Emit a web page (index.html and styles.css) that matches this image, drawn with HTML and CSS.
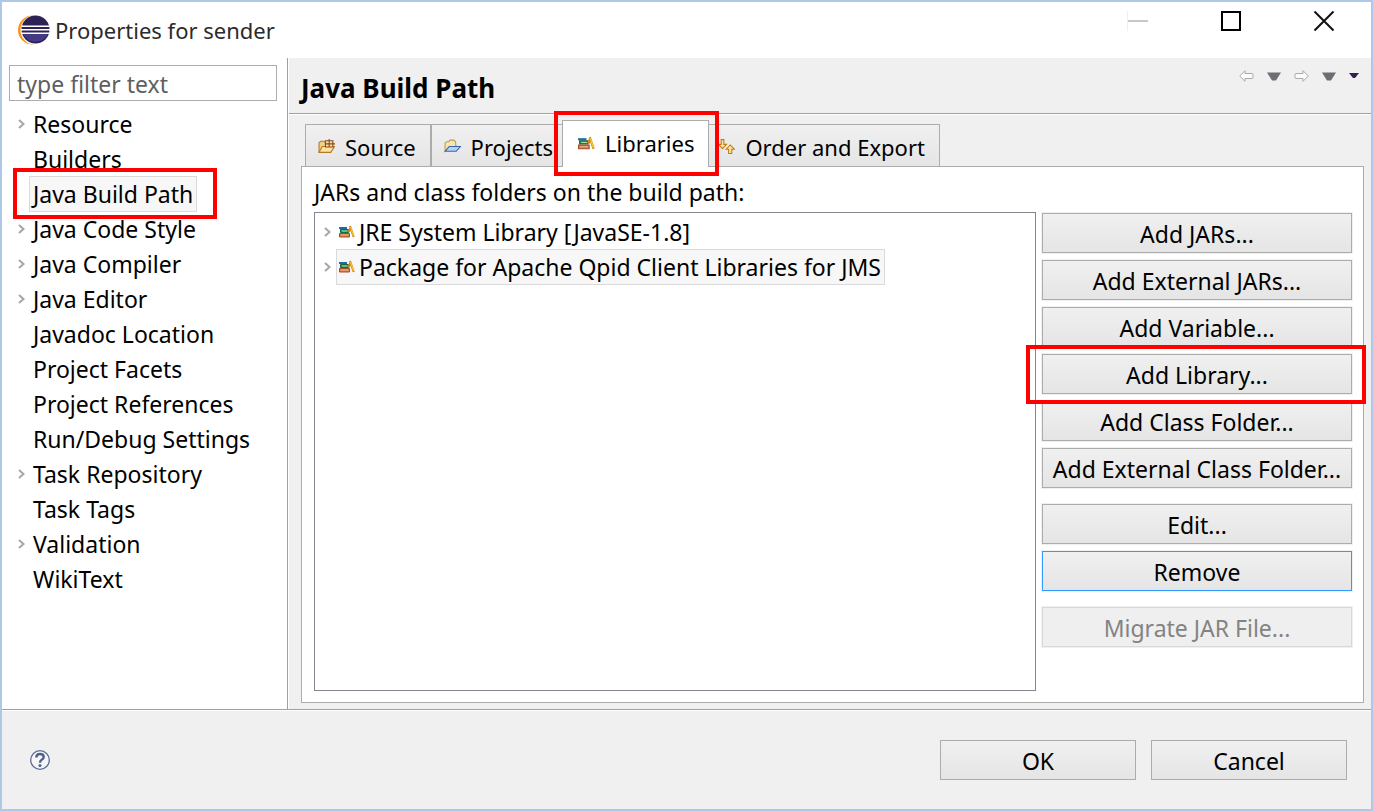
FILE: index.html
```html
<!DOCTYPE html>
<html lang="en">
<head>
<meta charset="utf-8">
<title>Properties for sender</title>
<link rel="stylesheet" href="styles.css">
</head>
<body>
<svg class="defs" aria-hidden="true">
  <symbol id="chevron" viewBox="0 0 7 10"><path d="M1 1l4.500 4-4.500 4" fill="none" stroke="#a6a6a6" stroke-width="2"/></symbol>
  <symbol id="books" viewBox="0 0 16 13">
    <path d="M0 1.500h8v2H0z" fill="#1f6aa5"/><path d="M1.500 4h8v3h-8z" fill="#23935e" stroke="#136b45"/><path d="M3 5.500h5.500" stroke="#a9dcb0"/>
    <path d="M.5 8h10v3.500H.5z" fill="#d08050" stroke="#a64e25"/><path d="M2 9.500h7.500" stroke="#efb58a"/>
    <path d="M11 .5l3.700 11M11.500 2l-1.700 4.500" stroke="#d98c12" stroke-width="2.200" fill="none"/><path d="M11.500 1.500l3 9" stroke="#ffcb3d"/>
  </symbol>
</svg>
<div class="window">
  <header class="titlebar">
    <svg class="logo" viewBox="0 0 32 30" aria-hidden="true">
      <circle cx="14.500" cy="15" r="14.500" fill="#f7941e"/><circle cx="17.500" cy="15" r="15" fill="#fff"/>
      <circle cx="17.500" cy="14.500" r="14" fill="#2c2255"/><path d="M5 19h25a14 14 0 0 1-25 0z" fill="#433a85"/>
      <path d="M3.500 11.200h28M3 14.700h29M3.500 18.200h28" stroke="#fff" stroke-width="1.600"/>
    </svg>
    <h1 class="title">Properties for sender</h1>
    <div class="window-buttons">
      <button class="window-button" aria-label="Minimize" disabled><svg viewBox="0 0 22 22"><path d="M.5 1v20" stroke="#efefef"/><path d="M1 11h20" stroke="#c8c8c8" stroke-width="2"/></svg></button>
      <button class="window-button" aria-label="Maximize"><svg viewBox="0 0 22 22"><path d="M2 2h18v18H2z" fill="none" stroke="#000" stroke-width="2"/></svg></button>
      <button class="window-button" aria-label="Close"><svg viewBox="0 0 22 22"><path d="M1.500 1.500l19 19M20.500 1.500l-19 19" stroke="#111" stroke-width="2"/></svg></button>
    </div>
  </header>
  <div class="body">
    <aside class="sidebar">
      <input class="filter" type="text" placeholder="type filter text" aria-label="Filter">
      <nav class="categories" aria-label="Categories">
        <a class="category" href="#"><svg class="chevron"><use href="#chevron"/></svg><span>Resource</span></a>
        <a class="category" href="#"><span>Builders</span></a>
        <a class="category selected marked" href="#" aria-current="page"><span>Java Build Path</span></a>
        <a class="category" href="#"><svg class="chevron"><use href="#chevron"/></svg><span>Java Code Style</span></a>
        <a class="category" href="#"><svg class="chevron"><use href="#chevron"/></svg><span>Java Compiler</span></a>
        <a class="category" href="#"><svg class="chevron"><use href="#chevron"/></svg><span>Java Editor</span></a>
        <a class="category" href="#"><span>Javadoc Location</span></a>
        <a class="category" href="#"><span>Project Facets</span></a>
        <a class="category" href="#"><span>Project References</span></a>
        <a class="category" href="#"><span>Run/Debug Settings</span></a>
        <a class="category" href="#"><svg class="chevron"><use href="#chevron"/></svg><span>Task Repository</span></a>
        <a class="category" href="#"><span>Task Tags</span></a>
        <a class="category" href="#"><svg class="chevron"><use href="#chevron"/></svg><span>Validation</span></a>
        <a class="category" href="#"><span>WikiText</span></a>
      </nav>
    </aside>
    <main class="page">
      <div class="page-header">
        <h2 class="page-title">Java Build Path</h2>
        <div class="history">
          <button class="tool" aria-label="Back"><svg width="15" height="12" viewBox="0 0 15 12"><path d="M.7 6L6 .7V3.500h7q1 0 1 1v3q0 1-1 1H6v2.800z" fill="#fafafa" stroke="#aaa"/></svg></button>
          <button class="tool" aria-label="Back history"><svg width="14" height="9" viewBox="0 0 14 9"><path d="M0 .5h14L9 8.500H5z" fill="#6d6e73"/></svg></button>
          <button class="tool" aria-label="Forward"><svg width="15" height="12" viewBox="0 0 15 12"><path d="M14.300 6L9 .7V3.500H2q-1 0-1 1v3q0 1 1 1h7v2.800z" fill="#fafafa" stroke="#aaa"/></svg></button>
          <button class="tool" aria-label="Forward history"><svg width="14" height="9" viewBox="0 0 14 9"><path d="M0 .5h14L9 8.500H5z" fill="#6d6e73"/></svg></button>
          <button class="tool" aria-label="View menu"><svg width="10" height="6" viewBox="0 0 10 6"><path d="M0 0h10L6 5H4z" fill="#33204f"/></svg></button>
        </div>
      </div>
      <div class="content">
        <div class="tabs" role="tablist">
          <button class="tab" role="tab" aria-selected="false">
            <svg class="tab-icon" viewBox="0 0 16 14"><path d="M1 12V3.500l1.500-1.500h3L7 3.500h5V12z" fill="#f3d082" stroke="#b5782a"/><path d="M1 12.500L4 7h11.500l-3.500 5.500z" fill="#fbe3a2" stroke="#b5782a"/><path d="M7 1.500h7v6H7zM7 4.500h9M10.500 0v7.500" fill="#f7dfae" stroke="#8a4b14"/></svg>
            <span>Source</span></button>
          <button class="tab" role="tab" aria-selected="false">
            <svg class="tab-icon" viewBox="0 0 16 14"><path d="M1 11.500V4l1.500-1.500h2L5.500 1h4L11 3v3l1 1H5z" fill="#fae7a8" stroke="#b79a5b"/><path d="M1 11.500L5 7h10.500l-4 4.500z" fill="#b3d2f7" stroke="#3764b0"/></svg>
            <span>Projects</span></button>
          <button class="tab active marked" role="tab" aria-selected="true">
            <svg class="tab-icon"><use href="#books"/></svg>
            <span>Libraries</span></button>
          <button class="tab" role="tab" aria-selected="false">
            <svg class="tab-icon" viewBox="0 0 16 14"><path d="M3 .5h2.500V5H8L4.300 9 .5 5H3z" fill="#ffe596" stroke="#bd7b1c"/><path d="M10 13.500h3V9.500h2.500L11.500 5.500 7.700 9.500H10z" fill="#ffe596" stroke="#bd7b1c"/></svg>
            <span>Order and Export</span></button>
        </div>
        <section class="panel" role="tabpanel">
          <p class="panel-label" id="jars">JARs and class folders on the build path:</p>
          <div class="panel-body">
            <ul class="entries" aria-labelledby="jars">
              <li class="entry"><svg class="chevron"><use href="#chevron"/></svg><span class="entry-label"><svg class="entry-icon"><use href="#books"/></svg>JRE System Library [JavaSE-1.8]</span></li>
              <li class="entry selected"><svg class="chevron"><use href="#chevron"/></svg><span class="entry-label"><svg class="entry-icon"><use href="#books"/></svg>Package for Apache Qpid Client Libraries for JMS</span></li>
            </ul>
            <div class="actions">
              <div class="action-group">
                <button class="button">Add JARs...</button>
                <button class="button">Add External JARs...</button>
                <button class="button">Add Variable...</button>
                <button class="button marked">Add Library...</button>
                <button class="button">Add Class Folder...</button>
                <button class="button">Add External Class Folder...</button>
              </div>
              <div class="action-group">
                <button class="button">Edit...</button>
                <button class="button default">Remove</button>
              </div>
              <button class="button" disabled>Migrate JAR File...</button>
            </div>
          </div>
        </section>
      </div>
    </main>
  </div>
  <footer class="footer">
    <button class="help" aria-label="Help"><svg width="20" height="20" viewBox="0 0 20 20"><circle cx="10" cy="10" r="9.300" fill="#f6f6f8" stroke="#5c7094" stroke-width="1.300"/><path d="M6.300 7.500q0-3.500 3.700-3.500t3.700 3q0 1.700-2 2.800Q10 10.700 10 12.800" fill="none" stroke="#4d618b" stroke-width="2.400"/><circle cx="10" cy="15.500" r="1.500" fill="#4d618b"/></svg></button>
    <div class="footer-buttons">
      <button class="button">OK</button>
      <button class="button">Cancel</button>
    </div>
  </footer>
</div>
</body>
</html>
```
FILE: styles.css
```css
* { box-sizing: border-box; }

body {
  margin: 0;
  font: 23px/34px "Noto Sans", "Open Sans", sans-serif;
  color: #000;
}

button, input { font: inherit; color: inherit; }
h1, h2, p, ul { margin: 0; padding: 0; }
svg { display: block; flex: none; }
.defs { position: absolute; width: 0; height: 0; }

.window {
  display: flex;
  flex-direction: column;
  min-height: 100vh;
  border: 2px solid #aec9e8;
  background: #fff;
}

/* Title bar */
.titlebar {
  display: flex;
  align-items: center;
  height: 56px;
  padding: 0 36px 0 16px;
}
.logo { width: 32px; height: 30px; }
.title { margin-left: 5px; font-size: 22px; font-weight: 400; color: #2b2b2b; }
.window-buttons { display: flex; gap: 71px; margin: 0 0 18px auto; }
.window-button { padding: 0; border: 0; background: none; }
.window-button svg { width: 22px; height: 22px; }

.body { display: flex; flex: 1; }

/* Category list */
.sidebar {
  flex: 0 0 286px;
  padding: 7px 10px 7px 7px;
  border-right: 1px solid #a0a0a0;
}
.filter {
  display: block;
  width: 100%;
  height: 36px;
  padding: 2px 7px 0;
  border: 1px solid #abadb3;
  background: #fff;
}
.filter::placeholder { color: #5f5f5f; opacity: 1; }
.categories { display: flex; flex-direction: column; margin-top: 5px; }
.category {
  position: relative;
  display: grid;
  grid-template-columns: 20px auto;
  justify-content: start;
  align-items: center;
  height: 35px;
  color: #000;
  text-decoration: none;
  white-space: nowrap;
}
.category span {
  grid-column: 2;
  padding: 0 3px;
  border: 1px solid transparent;
}
.category.selected span, .entry.selected .entry-label {
  border-color: #dadada;
  background: #f7f7f7;
}
.category .chevron { margin-left: 9px; }
.chevron { width: 7px; height: 10px; }

/* Red highlight frames */
.marked::after {
  content: "";
  position: absolute;
  z-index: 2;
  border: 4px solid #f00;
  pointer-events: none;
}
.category.marked::after { inset: -8px 60px -8px 4px; }
.tab.marked::after { inset: -10px -11px -9px -9px; }
.button.marked::after { inset: -10px -15px -11px -17px; }

/* Page */
.page {
  display: flex;
  flex: 1;
  flex-direction: column;
  min-width: 0;
  border-left: 1px solid #fff;
  background: #f0f0f0;
}
.page-header {
  display: flex;
  justify-content: space-between;
  height: 56px;
  padding: 13px 12px 0;
  border-bottom: 1px solid #a0a0a0;
  box-shadow: 0 1px #fff;
}
.page-title { font-size: 26px; font-weight: 700; }
.history { display: flex; gap: 13px; height: 10px; align-items: center; }
.tool { padding: 0; border: 0; background: none; }

.content {
  display: flex;
  flex: 1;
  flex-direction: column;
  padding: 6px 7px 6px 12px;
}
.tabs { display: flex; align-items: flex-end; padding-left: 4px; font-size: 22px; }
.tab {
  display: flex;
  align-items: center;
  gap: 10px;
  height: 42px;
  padding: 2px 14px 0 12px;
  border: 1px solid #acacac;
  border-bottom: 0;
  background: linear-gradient(#f0f0f0, #e5e5e5);
  white-space: nowrap;
}
.tab-icon { width: 17px; height: 15px; }
.tab.active {
  position: relative;
  z-index: 1;
  height: 47px;
  margin: 0 -4px -1px -6px;
  padding: 0 14px 2px 15px;
  background: #fff;
}

.panel {
  display: flex;
  flex: 1;
  flex-direction: column;
  padding: 8px 11px 11px 12px;
  border: 1px solid #acacac;
  background: #fff;
}
.panel-body { display: flex; flex: 1; gap: 6px; margin-top: 3px; }
.entries {
  flex: 1;
  padding: 1px 9px;
  border: 1px solid #828790;
  list-style: none;
}
.entry { display: flex; align-items: center; gap: 5px; height: 35px; white-space: nowrap; }
.entry-label {
  display: flex;
  align-items: center;
  gap: 4px;
  padding: 0 3px 0 2px;
  border: 1px solid transparent;
}
.entry-icon { width: 16px; height: 14px; }

/* Buttons */
.actions { display: flex; flex: 0 0 310px; flex-direction: column; gap: 16px; padding: 1px 0; }
.action-group { display: flex; flex-direction: column; gap: 7px; }
.button {
  position: relative;
  height: 40px;
  padding: 2px 8px 0;
  border: 1px solid #acacac;
  background: linear-gradient(#f0f0f0, #e5e5e5);
  box-shadow: 0 0 0 1px #f0f0f0;
  line-height: 32px;
  white-space: nowrap;
}
.button.default { border-color: #3399ff; }
.button:disabled { border-color: #d9d9d9; background: #efefef; color: #838383; }

/* Footer */
.footer {
  display: flex;
  align-items: center;
  justify-content: space-between;
  height: 100px;
  padding: 0 24px 0 28px;
  border-top: 1px solid #a0a0a0;
  background: #f0f0f0;
  box-shadow: inset 0 1px #fff;
}
.help { padding: 0; border: 0; background: none; }
.footer-buttons { display: flex; gap: 15px; }
.footer-buttons .button { width: 196px; }
```
